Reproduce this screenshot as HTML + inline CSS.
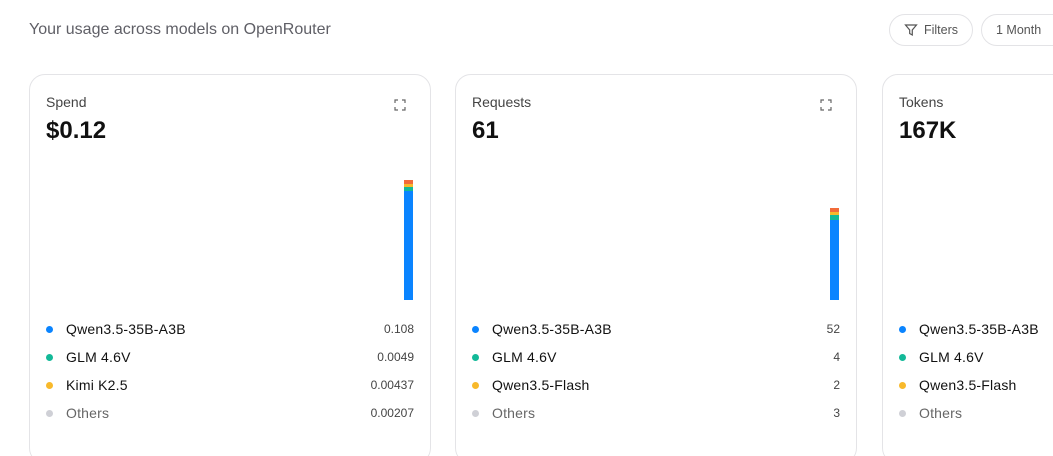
<!DOCTYPE html>
<html style="height:456px;overflow:hidden"><head><meta charset="utf-8"><style>
*{box-sizing:border-box;margin:0;padding:0}
body{width:1053px;height:456px;overflow:hidden;background:#fff;font-family:"Liberation Sans",sans-serif;color:#111;position:relative}
.title{position:absolute;left:29px;top:21px;font-size:16px;color:#5f5f66}
.btn{position:absolute;top:14px;height:32px;border:1px solid #e3e3e6;border-radius:16px;font-size:12.5px;color:#555;display:flex;align-items:center;padding:0 14px;gap:6px}
.card{position:absolute;top:74px;width:402px;height:390px;border:1px solid #e4e4e7;border-radius:16px}
.lbl{position:absolute;left:16px;top:19px;font-size:14px;color:#444}
.val{position:absolute;left:16px;top:42px;font-size:24px;font-weight:bold;color:#111}
.exp{position:absolute;left:364px;top:24px}
.bar{position:absolute;left:374px;width:9px}
.leg{position:absolute;left:16px;right:16px;height:20px;font-size:14px;display:flex;align-items:center}
.dot{width:7px;height:7px;border-radius:50%;margin-right:13px}
.leg .n{flex:1;letter-spacing:.2px}
.leg .v{font-size:12px;color:#444}
</style></head><body>
<div class="title">Your usage across models on OpenRouter</div>
<div class="btn" style="left:889px;width:84px"><svg width="14" height="14" viewBox="0 0 14 14" fill="none" stroke="#555" stroke-width="1.2"><path d="M1.5 2h11L8.3 7v5L5.7 10.5V7z"/></svg>Filters</div>
<div class="btn" style="left:981px;width:90px">1 Month</div>

<div class="card" style="left:29px">
<div class="lbl">Spend</div><div class="val">$0.12</div>
<svg class="exp" width="12" height="12" viewBox="0 0 12 12" fill="none" stroke="#666" stroke-width="1.2"><path d="M1 4V1h3M8 1h3v3M11 8v3H8M4 11H1V8"/></svg>
<div class="bar" style="top:105px;height:4px;background:#f26b3a"></div>
<div class="bar" style="top:109px;height:3px;background:#f8b92b"></div>
<div class="bar" style="top:112px;height:4px;background:#13b998"></div>
<div class="bar" style="top:116px;height:109px;background:#0a84ff"></div>
<div class="leg" style="top:244px"><span class="dot" style="background:#0a84ff"></span><span class="n">Qwen3.5-35B-A3B</span><span class="v">0.108</span></div>
<div class="leg" style="top:272px"><span class="dot" style="background:#13b998"></span><span class="n">GLM 4.6V</span><span class="v">0.0049</span></div>
<div class="leg" style="top:300px"><span class="dot" style="background:#f8b92b"></span><span class="n">Kimi K2.5</span><span class="v">0.00437</span></div>
<div class="leg" style="top:328px;color:#666"><span class="dot" style="background:#cfd0d6"></span><span class="n">Others</span><span class="v">0.00207</span></div>
</div>

<div class="card" style="left:455px">
<div class="lbl">Requests</div><div class="val">61</div>
<svg class="exp" width="12" height="12" viewBox="0 0 12 12" fill="none" stroke="#666" stroke-width="1.2"><path d="M1 4V1h3M8 1h3v3M11 8v3H8M4 11H1V8"/></svg>
<div class="bar" style="top:133px;height:4px;background:#f26b3a"></div>
<div class="bar" style="top:137px;height:3px;background:#f8b92b"></div>
<div class="bar" style="top:140px;height:5px;background:#13b998"></div>
<div class="bar" style="top:145px;height:80px;background:#0a84ff"></div>
<div class="leg" style="top:244px"><span class="dot" style="background:#0a84ff"></span><span class="n">Qwen3.5-35B-A3B</span><span class="v">52</span></div>
<div class="leg" style="top:272px"><span class="dot" style="background:#13b998"></span><span class="n">GLM 4.6V</span><span class="v">4</span></div>
<div class="leg" style="top:300px"><span class="dot" style="background:#f8b92b"></span><span class="n">Qwen3.5-Flash</span><span class="v">2</span></div>
<div class="leg" style="top:328px;color:#666"><span class="dot" style="background:#cfd0d6"></span><span class="n">Others</span><span class="v">3</span></div>
</div>

<div class="card" style="left:882px">
<div class="lbl">Tokens</div><div class="val">167K</div>
<div class="leg" style="top:244px;right:-100px"><span class="dot" style="background:#0a84ff"></span><span class="n">Qwen3.5-35B-A3B</span></div>
<div class="leg" style="top:272px;right:-100px"><span class="dot" style="background:#13b998"></span><span class="n">GLM 4.6V</span></div>
<div class="leg" style="top:300px;right:-100px"><span class="dot" style="background:#f8b92b"></span><span class="n">Qwen3.5-Flash</span></div>
<div class="leg" style="top:328px;right:-100px;color:#666"><span class="dot" style="background:#cfd0d6"></span><span class="n">Others</span></div>
</div>
</body></html>
